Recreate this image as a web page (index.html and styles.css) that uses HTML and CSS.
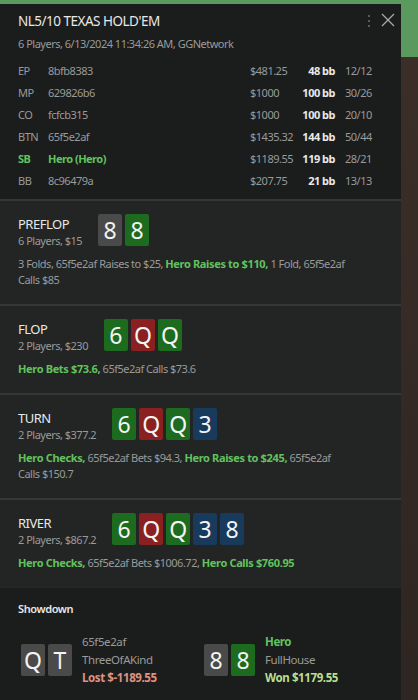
FILE: index.html
```html
<!DOCTYPE html>
<html lang="en">
<head>
  <meta charset="UTF-8" />
  <meta name="viewport" content="width=device-width, initial-scale=1.0" />
  <title>Hand History</title>
  <link rel="stylesheet" href="styles.css">
</head>
<body>
  <div class="panel">
    <header class="head">
      <div class="head__text">
        <h1 class="title">NL5/10 TEXAS HOLD'EM</h1>
        <div class="subtitle">6 Players, 6/13/2024 11:34:26 AM, GGNetwork</div>
      </div>
      <div class="head__tools">
        <svg class="icon icon--dots" width="6" height="14" viewBox="0 0 6 14">
          <circle cx="3" cy="2" r="1" />
          <circle cx="3" cy="7" r="1" />
          <circle cx="3" cy="12" r="1" />
        </svg>
        <svg class="icon icon--close" width="14" height="14" viewBox="0 0 14 14">
          <path d="M1 1 L13 13 M13 1 L1 13" />
        </svg>
      </div>
    </header>

    <div class="players">
      <div class="player"><span class="player__pos">EP</span><span class="player__name">8bfb8383</span><span class="player__stack">$481.25</span><span class="player__bb">48 bb</span><span class="player__stats">12/12</span></div>
      <div class="player"><span class="player__pos">MP</span><span class="player__name">629826b6</span><span class="player__stack">$1000</span><span class="player__bb">100 bb</span><span class="player__stats">30/26</span></div>
      <div class="player"><span class="player__pos">CO</span><span class="player__name">fcfcb315</span><span class="player__stack">$1000</span><span class="player__bb">100 bb</span><span class="player__stats">20/10</span></div>
      <div class="player"><span class="player__pos">BTN</span><span class="player__name">65f5e2af</span><span class="player__stack">$1435.32</span><span class="player__bb">144 bb</span><span class="player__stats">50/44</span></div>
      <div class="player player--hero"><span class="player__pos">SB</span><span class="player__name">Hero (Hero)</span><span class="player__stack">$1189.55</span><span class="player__bb">119 bb</span><span class="player__stats">28/21</span></div>
      <div class="player"><span class="player__pos">BB</span><span class="player__name">8c96479a</span><span class="player__stack">$207.75</span><span class="player__bb">21 bb</span><span class="player__stats">13/13</span></div>
    </div>

    <section class="street">
      <div class="street__head">
        <div>
          <div class="street__name">PREFLOP</div>
          <div class="street__meta">6 Players, $15</div>
        </div>
        <div class="cards">
          <span class="card card--grey">8</span>
          <span class="card card--green">8</span>
        </div>
      </div>
      <p class="actions">3 Folds, 65f5e2af Raises to $25, <b class="hero">Hero Raises to $110,</b> 1 Fold, 65f5e2af Calls $85</p>
    </section>

    <section class="street">
      <div class="street__head">
        <div>
          <div class="street__name">FLOP</div>
          <div class="street__meta">2 Players, $230</div>
        </div>
        <div class="cards">
          <span class="card card--green">6</span>
          <span class="card card--red">Q</span>
          <span class="card card--green">Q</span>
        </div>
      </div>
      <p class="actions"><b class="hero">Hero Bets $73.6,</b> 65f5e2af Calls $73.6</p>
    </section>

    <section class="street">
      <div class="street__head">
        <div>
          <div class="street__name">TURN</div>
          <div class="street__meta">2 Players, $377.2</div>
        </div>
        <div class="cards">
          <span class="card card--green">6</span>
          <span class="card card--red">Q</span>
          <span class="card card--green">Q</span>
          <span class="card card--blue">3</span>
        </div>
      </div>
      <p class="actions"><b class="hero">Hero Checks,</b> 65f5e2af Bets $94.3, <b class="hero">Hero Raises to $245,</b> 65f5e2af Calls $150.7</p>
    </section>

    <section class="street">
      <div class="street__head">
        <div>
          <div class="street__name">RIVER</div>
          <div class="street__meta">2 Players, $867.2</div>
        </div>
        <div class="cards">
          <span class="card card--green">6</span>
          <span class="card card--red">Q</span>
          <span class="card card--green">Q</span>
          <span class="card card--blue">3</span>
          <span class="card card--blue">8</span>
        </div>
      </div>
      <p class="actions"><b class="hero">Hero Checks,</b> 65f5e2af Bets $1006.72, <b class="hero">Hero Calls $760.95</b></p>
    </section>

    <section class="showdown">
      <h2 class="showdown__title">Showdown</h2>
      <div class="showdown__list">
        <div class="result">
          <div class="cards">
            <span class="card card--grey">Q</span>
            <span class="card card--grey">T</span>
          </div>
          <div class="result__text">
            <div>65f5e2af</div>
            <div>ThreeOfAKind</div>
            <div class="result__lost">Lost $-1189.55</div>
          </div>
        </div>
        <div class="result">
          <div class="cards">
            <span class="card card--grey">8</span>
            <span class="card card--green">8</span>
          </div>
          <div class="result__text">
            <div class="result__hero">Hero</div>
            <div>FullHouse</div>
            <div class="result__won">Won $1179.55</div>
          </div>
        </div>
      </div>
    </section>
  </div>
</body>
</html>
```

FILE: styles.css
```css
:root {
  --panel-bg: #1b1d1c;
  --street-bg: #222524;
  --line: #343736;
  --text: #e8e8e8;
  --muted: #9a9a9a;
  --hero: #62c25e;
  --card-grey: #4a4a4a;
  --card-green: #1c6b1e;
  --card-red: #8a2020;
  --card-blue: #183a5c;
}
* {
  box-sizing: border-box;
  margin: 0;
  padding: 0;
}
body {
  font-family: 'Noto Sans', 'Open Sans', sans-serif;
  font-size: 11px;
  letter-spacing: -0.5px;
  color: var(--muted);
  background: linear-gradient(to bottom, #5b9a5e 0, #5b9a5e 57px, #3b2e28 57px, #2e2622 100%);
  min-height: 100vh;
  padding-top: 4px;
}
.panel {
  width: 401px;
  min-height: calc(100vh - 4px);
  background: var(--panel-bg);
  display: flex;
  flex-direction: column;
}
.head {
  display: flex;
  justify-content: space-between;
  padding: 7px 6px 0 18px;
}
.title {
  font-size: 13.5px;
  font-weight: 400;
  letter-spacing: -0.5px;
  line-height: 20px;
  color: var(--text);
}
.subtitle {
  margin-top: 5px;
  line-height: 15px;
}
.head__tools {
  display: flex;
  gap: 9px;
  align-items: flex-start;
  padding-top: 2px;
}
.icon--dots {
  fill: #6f716f;
  margin-top: 1px;
}
.icon--close {
  stroke: #a9aaa9;
  stroke-width: 1.3;
  fill: none;
}
.players {
  padding: 9px 18px 7px;
}
.player {
  display: grid;
  grid-template-columns: 30px 202px 52px 33px 1fr;
  line-height: 22px;
  white-space: nowrap;
}
.player__bb {
  color: var(--text);
  font-weight: 700;
  text-align: right;
}
.player__stats {
  padding-left: 10px;
}
.player--hero .player__pos,
.player--hero .player__name {
  color: var(--hero);
  font-weight: 700;
}
.street {
  background: var(--street-bg);
  border-top: 2px solid var(--line);
  padding: 13px 18px 16px;
}
.street__head {
  display: flex;
  gap: 16px;
  align-items: flex-start;
}
.street__name {
  font-size: 13px;
  letter-spacing: -0.5px;
  line-height: 20px;
  color: var(--text);
}
.street__meta {
  line-height: 14px;
}
.cards {
  display: flex;
  gap: 3px;
}
.card {
  width: 24px;
  height: 32px;
  border-radius: 2px;
  font-size: 23px;
  letter-spacing: 0;
  line-height: 32px;
  text-align: center;
  color: #f4f4f4;
}
.card--grey {
  background: var(--card-grey);
}
.card--green {
  background: var(--card-green);
}
.card--red {
  background: var(--card-red);
}
.card--blue {
  background: var(--card-blue);
}
.actions {
  margin-top: 8px;
  line-height: 16px;
  max-width: 330px;
}
.hero {
  color: var(--hero);
  letter-spacing: -0.35px;
}
.showdown {
  flex: 1;
  background: var(--panel-bg);
  border-top: 1px solid #262827;
  padding: 13px 18px;
}
.showdown__title {
  font-size: 11px;
  font-weight: 600;
  letter-spacing: -0.4px;
  line-height: 16px;
  color: var(--text);
}
.showdown__list {
  display: grid;
  grid-template-columns: 183px 1fr;
  margin-top: 16px;
  padding-left: 3px;
}
.result {
  display: flex;
  align-items: center;
  gap: 10px;
}
.result__text {
  line-height: 18px;
  font-size: 11.5px;
  letter-spacing: -0.4px;
}
.result__hero {
  color: var(--hero);
  font-weight: 700;
}
.result__lost {
  color: #e0917f;
  font-weight: 700;
}
.result__won {
  color: #b9df8e;
  font-weight: 700;
}
```
